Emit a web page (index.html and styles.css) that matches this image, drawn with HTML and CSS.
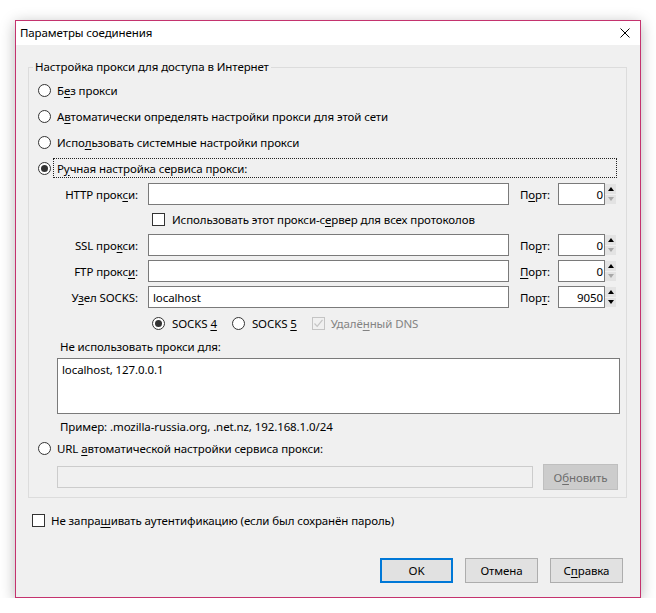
FILE: index.html
```html
<!DOCTYPE html>
<html lang="ru">
<head>
<meta charset="utf-8">
<title>Параметры соединения</title>
<link rel="stylesheet" href="styles.css">
</head>
<body>
<div class="window">
  <div class="titlebar">
    <span class="title">Параметры соединения</span>
    <svg class="close" width="10" height="10" viewBox="0 0 10 10"><path d="M0.5 0.5 L9.5 9.5 M9.5 0.5 L0.5 9.5" stroke="#000" stroke-width="1" fill="none"/></svg>
  </div>
  <div class="content">
    <fieldset class="group">
      <legend>Настройка прокси для доступа в Интернет</legend>
      <div class="opt"><span class="radio"></span><span>Б<u>е</u>з прокси</span></div>
      <div class="opt"><span class="radio"></span><span>А<u>в</u>томатически определять настройки прокси для этой сети</span></div>
      <div class="opt"><span class="radio"></span><span>Испо<u>л</u>ьзовать системные настройки прокси</span></div>
      <div class="opt"><span class="radio checked tight"></span><span class="focus">Р<u>у</u>чная настройка сервиса прокси:</span></div>

      <div class="proxy">
        <span class="lbl">HTTP прок<u>с</u>и:</span>
        <span class="field"></span>
        <span class="plbl">П<u>о</u>рт:</span>
        <span class="port"><span class="pfield">0</span><span class="spin"><span class="sb"><span class="up"></span></span><span class="sb"><span class="down off"></span></span></span></span>

        <span class="allrow"><span class="check"></span><span>Использовать этот прокси-с<u>е</u>рвер для всех протоколов</span></span>

        <span class="lbl">SSL про<u>к</u>си:</span>
        <span class="field"></span>
        <span class="plbl">По<u>р</u>т:</span>
        <span class="port"><span class="pfield">0</span><span class="spin"><span class="sb"><span class="up"></span></span><span class="sb"><span class="down off"></span></span></span></span>

        <span class="lbl">FTP прокс<u>и</u>:</span>
        <span class="field"></span>
        <span class="plbl"><u>П</u>орт:</span>
        <span class="port"><span class="pfield">0</span><span class="spin"><span class="sb"><span class="up"></span></span><span class="sb"><span class="down off"></span></span></span></span>

        <span class="lbl">У<u>з</u>ел SOCKS:</span>
        <span class="field">localhost</span>
        <span class="plbl">Пор<u>т</u>:</span>
        <span class="port"><span class="pfield">9050</span><span class="spin"><span class="sb"><span class="up"></span></span><span class="sb"><span class="down"></span></span></span></span>

        <span class="socks">
          <span class="radio checked"></span><span class="st">SOCKS <u>4</u></span>
          <span class="radio"></span><span class="st">SOCKS <u>5</u></span>
          <span class="check disabled"><svg width="11" height="11" viewBox="0 0 11 11"><path d="M1.5 5.5 L4.2 8.3 L9.5 1.8" stroke="#c4c4c4" stroke-width="1.2" fill="none"/></svg></span><span class="gray">Удалё<u>н</u>ный DNS</span>
        </span>
      </div>

      <div class="nolbl">Не использовать прокси для:</div>
      <div class="area">localhost, 127.0.0.1</div>
      <div class="example">Пример: .mozilla-russia.org, .net.nz, 192.168.1.0/24</div>
      <div class="opt"><span class="radio"></span><span>URL <u>а</u>втоматической настройки сервиса прокси:</span></div>
      <div class="urlrow">
        <span class="urlfield"></span>
        <span class="btn dis">О<u>б</u>новить</span>
      </div>
    </fieldset>

    <div class="auth"><span class="check"></span><span>Не запра<u>ш</u>ивать аутентификацию (если был сохранён пароль)</span></div>

    <div class="buttons">
      <span class="btn def">OK</span>
      <span class="btn">Отмена</span>
      <span class="btn">С<u>п</u>равка</span>
    </div>
  </div>
</div>
</body>
</html>
```

FILE: styles.css
```css
* { box-sizing: border-box; }
body {
  margin: 0;
  background: #ffffff;
  font-family: "Noto Sans", "Open Sans", sans-serif;
  font-size: 11.5px;
  letter-spacing: -0.1px;
  color: #000;
}
u { text-decoration: underline; text-underline-offset: 2px; }
.window {
  margin: 20px 0 0 15px;
  width: 626px;
  height: 578px;
  border: 1px solid #c4336e;
  background: #f0f0f0;
  display: flex;
  flex-direction: column;
  box-shadow: 0 3px 14px rgba(0,0,0,0.28);
}
.titlebar {
  height: 24px;
  background: #fff;
  display: flex;
  align-items: center;
  justify-content: space-between;
  padding: 0 10px 0 4px;
  flex: none;
}
.title { line-height: 16px; }
.content {
  padding: 14px 13px 0 12px;
  display: flex;
  flex-direction: column;
}
.group {
  margin: 0;
  border: 1px solid #dcdcdc;
  padding: 2px 0 7px 9px;
  min-width: 0;
}
.group legend {
  margin-left: -5px;
  padding: 0 2px;
  line-height: 16px;
}
.opt {
  display: flex;
  align-items: center;
  height: 26px;
}
.radio {
  width: 13px;
  height: 13px;
  border: 1px solid #333;
  border-radius: 50%;
  background: #fff;
  margin-right: 6px;
  flex: none;
  display: inline-flex;
  align-items: center;
  justify-content: center;
}
.radio.checked::after {
  content: "";
  width: 7px;
  height: 7px;
  border-radius: 50%;
  background: #333;
}
.radio.tight { margin-right: 2px; }
.focus {
  flex: 1;
  margin-right: 9px;
  height: 20px;
  border: 1px dotted #222;
  padding-left: 3px;
  display: flex;
  align-items: center;
}
.check {
  width: 13px;
  height: 13px;
  border: 1px solid #333;
  background: #fff;
  flex: none;
  display: inline-flex;
  align-items: center;
  justify-content: center;
}
.check.disabled { border-color: #c4c4c4; background: #f0f0f0; }
.proxy {
  display: grid;
  grid-template-columns: 80px 361px 29px 58px;
  grid-template-rows: 22px 21px 22px 22px 22px 22px;
  column-gap: 10px;
  row-gap: 4px;
  margin: 2px 0 0 20px;
  align-items: center;
}
.lbl { text-align: right; }
.plbl { padding-left: 1px; }
.field {
  height: 22px;
  border: 1px solid #7a7a7a;
  background: #fff;
  padding-left: 4px;
  display: flex;
  align-items: center;
}
.port { display: flex; height: 22px; }
.pfield {
  width: 47px;
  height: 22px;
  border: 1px solid #7a7a7a;
  background: #fff;
  display: flex;
  align-items: center;
  justify-content: flex-end;
  padding-right: 1px;
}
.spin {
  width: 11px;
  display: flex;
  flex-direction: column;
  gap: 1px;
  padding: 1px 0;
}
.sb {
  flex: 1;
  background: #e3e3e3;
  display: flex;
  align-items: center;
  justify-content: center;
}
.up, .down { width: 0; height: 0; border-left: 3px solid transparent; border-right: 3px solid transparent; }
.up { border-bottom: 4px solid #000; }
.down { border-top: 4px solid #000; }
.down.off { border-top-color: #a8a8a8; }
.allrow, .socks {
  grid-column: 2 / span 3;
  display: flex;
  align-items: center;
  padding-left: 4px;
}
.allrow .check { margin-right: 7px; }
.socks .radio { margin-right: 7px; }
.socks .st { margin-right: 15px; }
.socks .check { margin-right: 6px; }
.gray { color: #838383; }
.nolbl { margin: 5px 0 0 22px; line-height: 16px; }
.area {
  margin: 3px 6px 0 19px;
  height: 56px;
  border: 1px solid #7a7a7a;
  background: #fff;
  padding: 3px 4px;
  line-height: 16px;
}
.example { margin: 5px 0 0 22px; line-height: 16px; }
.urlrow {
  display: flex;
  align-items: center;
  height: 26px;
  margin: 3px 8px 0 19px;
  gap: 10px;
}
.urlfield {
  flex: 1;
  height: 22px;
  border: 1px solid #cccccc;
  background: #f0f0f0;
}
.btn {
  width: 73px;
  height: 25px;
  border: 1px solid #adadad;
  background: #e1e1e1;
  display: flex;
  align-items: center;
  justify-content: center;
  flex: none;
}
.btn.dis {
  width: 75px;
  height: 26px;
  background: #cccccc;
  border-color: #bfbfbf;
  color: #6d6d6d;
}
.btn.def { border: 2px solid #0078d7; }
.auth {
  display: flex;
  align-items: center;
  margin: 14px 0 0 4px;
  height: 16px;
}
.auth .check { margin-right: 6px; }
.buttons {
  display: flex;
  justify-content: flex-end;
  gap: 12px;
  margin: 30px 4px 0 0;
}
```
